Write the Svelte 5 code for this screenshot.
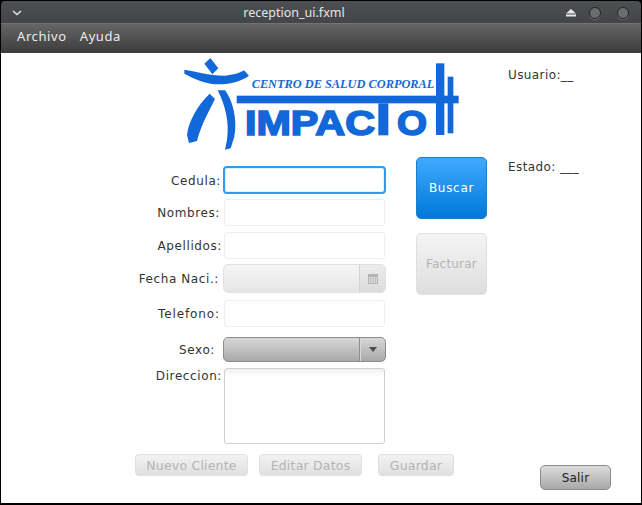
<script lang="ts">
  let { user = "__", status = "___" }: { user?: string; status?: string } = $props();
</script>

<div class="window">
  <header class="titlebar">
    <svg class="chevron" width="10" height="6" viewBox="0 0 10 6" fill="none" stroke="#e4e4e4" stroke-width="1.6"><polyline points="1,1 5,4.5 9,1" /></svg>
    <span class="title">reception_ui.fxml</span>
    <div class="controls">
      <svg width="10" height="8" viewBox="0 0 10 8" fill="#e8e8e8"><polygon points="5,0 10,4.5 0,4.5" /><rect x="0" y="5.5" width="10" height="2" /></svg>
      <span class="dot first"></span>
      <span class="dot"></span>
    </div>
  </header>

  <nav class="menubar">
    <span>Archivo</span>
    <span>Ayuda</span>
  </nav>

  <main class="content">
    <svg class="logo" width="295" height="100" viewBox="0 0 885 300">
      <g fill="#1268d8">
        <polygon points="88,26 106,9 130,40 112,58" />
        <path d="M28,44 C60,48 100,62 150,62 C175,60 195,54 207,46 L222,62 C200,78 170,88 130,88 C100,88 70,78 40,62 L28,56 Z" />
        <path d="M104,116 L120,132 C104,165 80,205 66,258 L42,264 L36,240 C40,200 68,150 104,116 Z" />
        <path d="M128,106 L150,106 C172,135 188,190 178,245 L167,280 L150,284 L156,255 C164,200 150,150 128,106 Z" />
        <rect x="185" y="122" width="666" height="23" />
        <rect x="610" y="145" width="30" height="96" />
        <rect x="783" y="25" width="25" height="215" />
        <rect x="818" y="65" width="17" height="170" />
        <text class="brand" x="210" y="240" textLength="390" lengthAdjust="spacingAndGlyphs">IMPAC</text>
        <text class="brand" x="666" y="240" textLength="90" lengthAdjust="spacingAndGlyphs">O</text>
        <text class="tagline" x="230" y="100" textLength="548" lengthAdjust="spacingAndGlyphs">CENTRO DE SALUD CORPORAL</text>
      </g>
    </svg>
    <p class="status-text user">Usuario:{user}</p>

    <button class="tall primary buscar">Buscar</button>
    <p class="status-text estado">Estado: {status}</p>

    <label class="label r-cedula" style="padding-right: 2px">Cedula:</label>
    <input class="field focused r-cedula" />

    <label class="label r-nombres" style="padding-right: 3px">Nombres:</label>
    <input class="field r-nombres" disabled />

    <label class="label r-apellidos" style="padding-right: 1px">Apellidos:</label>
    <input class="field r-apellidos" disabled />

    <button class="tall facturar" disabled>Facturar</button>

    <label class="label r-fecha" style="padding-right: 4px">Fecha Naci.:</label>
    <div class="picker r-fecha">
      <span class="picker-btn">
        <svg width="10" height="10" viewBox="0 0 10 10"><rect width="10" height="10" fill="#b4b4b4" /><g fill="#e6e6e6"><rect x="1" y="3" width="1.5" height="1.5" /><rect x="3.2" y="3" width="1.5" height="1.5" /><rect x="5.4" y="3" width="1.5" height="1.5" /><rect x="7.6" y="3" width="1.5" height="1.5" /><rect x="1" y="5.2" width="1.5" height="1.5" /><rect x="3.2" y="5.2" width="1.5" height="1.5" /><rect x="5.4" y="5.2" width="1.5" height="1.5" /><rect x="7.6" y="5.2" width="1.5" height="1.5" /><rect x="1" y="7.4" width="1.5" height="1.5" /><rect x="3.2" y="7.4" width="1.5" height="1.5" /><rect x="5.4" y="7.4" width="1.5" height="1.5" /><rect x="7.6" y="7.4" width="1.5" height="1.5" /></g></svg>
      </span>
    </div>

    <label class="label r-telefono wide" style="padding-right: 3px">Telefono:</label>
    <input class="field r-telefono" disabled />

    <label class="label r-sexo" style="padding-right: 8px">Sexo:</label>
    <div class="combo r-sexo">
      <span class="combo-btn">
        <svg width="8" height="5" viewBox="0 0 8 5" fill="#4c4c4c"><polygon points="0,0 8,0 4,5" /></svg>
      </span>
    </div>

    <label class="label r-direccion top" style="padding-right: 1px">Direccion:</label>
    <textarea class="area r-direccion"></textarea>

    <footer class="actions">
      <button class="small" style="width: 113px" disabled>Nuevo Cliente</button>
      <button class="small" style="width: 103px; margin-left: 11px" disabled>Editar Datos</button>
      <button class="small" style="width: 76px; margin-left: 16px" disabled>Guardar</button>
      <button class="salir">Salir</button>
    </footer>
  </main>
</div>

<style>
  :global(body) {
    margin: 0;
    background: #000;
  }

  .window {
    width: 642px;
    height: 505px;
    box-sizing: border-box;
    display: flex;
    flex-direction: column;
    padding: 1px 1px 2px 1px;
    background: #000;
    border-radius: 5px 5px 0 0;
    overflow: hidden;
    font-family: "DejaVu Sans", sans-serif;
    font-size: 12px;
  }

  /* Title bar */
  .titlebar {
    height: 23px;
    flex-shrink: 0;
    box-sizing: border-box;
    display: flex;
    align-items: center;
    justify-content: center;
    position: relative;
    padding-right: 54px;
    background: linear-gradient(#4e4f52, #444548);
    border-radius: 4px 4px 0 0;
    border-bottom: 1px solid #727272;
    font-family: "Noto Sans", sans-serif;
    font-size: 12.5px;
    color: #e6e6e6;
  }

  .chevron {
    position: absolute;
    left: 11px;
    top: 9px;
  }

  .controls {
    position: absolute;
    right: 0;
    top: 0;
    height: 23px;
    display: flex;
    align-items: center;
  }

  .dot {
    width: 10px;
    height: 10px;
    margin: 0 12px 0 16px;
    border-radius: 50%;
    background: #6c6d6d;
    border: 1px solid #222;
    box-shadow: 0 1px 0 #666;
  }

  .dot.first {
    margin: 0 0 0 13px;
  }

  /* Menu bar */
  .menubar {
    height: 29px;
    flex-shrink: 0;
    box-sizing: border-box;
    display: flex;
    align-items: center;
    gap: 13px;
    padding: 0 0 6px 16px;
    background: linear-gradient(#656565, #3c3c3c);
    font-family: "Noto Sans", sans-serif;
    font-size: 13px;
    letter-spacing: 0.6px;
    color: #ececec;
  }

  /* Form */
  .content {
    flex: 1;
    background: #fff;
    display: grid;
    grid-template-columns: 222px 163px 30px 71px 21px 1fr;
    grid-template-rows: 104px 9px 33px 33px 32px 36px 37px 31px 86px 1fr;
    color: #333;
  }

  .logo {
    grid-column: 1 / 6;
    grid-row: 1;
    margin: 2px 0 0 174px;
  }

  .status-text {
    grid-column: 6;
    margin: 0;
    letter-spacing: 0.4px;
    white-space: nowrap;
  }

  .user {
    grid-row: 1;
    padding-top: 15px;
  }

  .estado {
    grid-row: 2 / 5;
    padding-top: 3px;
  }

  .label {
    grid-column: 1;
    justify-self: end;
    letter-spacing: 0.6px;
    line-height: 28px;
    white-space: nowrap;
  }

  .label.wide {
    letter-spacing: 0.9px;
  }

  .r-cedula.label,
  .r-fecha.label {
    line-height: 30px;
  }

  .r-sexo.label {
    line-height: 26px;
  }

  .label.top {
    line-height: 16px;
  }

  .r-cedula { grid-row: 3; }
  .r-nombres { grid-row: 4; }
  .r-apellidos { grid-row: 5; }
  .r-fecha { grid-row: 6; }
  .r-telefono { grid-row: 7; }
  .r-sexo { grid-row: 8; }
  .r-direccion { grid-row: 9; }

  .field {
    grid-column: 2;
    box-sizing: border-box;
    width: 161px;
    height: 27px;
    margin: 0 0 0 1px;
    padding: 0 6px;
    background: #fff;
    border: 1px solid #eeeeee;
    border-radius: 3px;
    outline: none;
  }

  .field.focused {
    width: 163px;
    height: 28px;
    margin: 0;
    border: 2px solid #2c9cf0;
    border-radius: 4px;
    box-shadow: inset 0 0 0 1px #e4f1fb;
  }

  .picker,
  .combo {
    grid-column: 2;
    box-sizing: border-box;
    width: 163px;
    display: flex;
    justify-content: flex-end;
    border-radius: 5px;
  }

  .picker {
    height: 29px;
    background: linear-gradient(#f5f5f5, #e6e6e6);
    border: 1px solid #e0e0e0;
  }

  .picker-btn {
    width: 25px;
    display: flex;
    align-items: center;
    justify-content: center;
    border-left: 1px solid #d4d4d4;
    background: linear-gradient(#ececec, #dcdcdc);
    border-radius: 0 4px 4px 0;
  }

  .combo {
    height: 25px;
    background: linear-gradient(#d8d8d8, #a8a8a8);
    border: 1px solid #8c8c8c;
  }

  .combo-btn {
    width: 25px;
    display: flex;
    align-items: center;
    justify-content: center;
    border-left: 1px solid #8e8e8e;
    box-shadow: inset 1px 0 0 #d8d8d8;
  }

  .area {
    grid-column: 2;
    box-sizing: border-box;
    width: 161px;
    height: 76px;
    margin: 0 0 0 1px;
    padding: 0;
    resize: none;
    background: linear-gradient(#f0f0f0, #fff 8px);
    border: 1px solid #cfcfcf;
    border-radius: 3px;
    outline: none;
  }

  button {
    box-sizing: border-box;
    padding: 0;
    font: inherit;
    letter-spacing: 0.2px;
  }

  .tall {
    grid-column: 4;
    width: 71px;
    height: 62px;
    border-radius: 5px;
  }

  .primary {
    background: linear-gradient(#40aaff, #0078d8);
    border: 1px solid #1a80cc;
    color: #fff;
    letter-spacing: 0.7px;
  }

  .buscar {
    grid-row: 2 / 5;
  }

  .facturar {
    grid-row: 5 / 8;
    margin-top: 1px;
    background: linear-gradient(#f4f4f4, #dedede);
    border: 1px solid #dfdfdf;
    color: #b4b4b4;
  }

  .actions {
    grid-column: 1 / -1;
    grid-row: 10;
    display: flex;
    align-items: flex-start;
    padding-left: 134px;
  }

  .small {
    height: 22px;
    background: linear-gradient(#f2f2f2, #e0e0e0);
    border: 1px solid #e0e0e0;
    border-radius: 4px;
    color: #b4b4b4;
    font-size: 12.5px;
  }

  .salir {
    width: 71px;
    height: 25px;
    margin: 11px 0 0 86px;
    background: linear-gradient(#dcdcdc, #a8a8a8);
    border: 1px solid #8c8c8c;
    border-radius: 5px;
    color: #222;
  }

  .brand {
    font-family: "Liberation Sans", sans-serif;
    font-weight: 700;
    font-size: 106px;
    stroke: #1268d8;
    stroke-width: 5px;
  }

  .tagline {
    font-family: "Liberation Serif", serif;
    font-style: italic;
    font-weight: 700;
    font-size: 38px;
  }
</style>
